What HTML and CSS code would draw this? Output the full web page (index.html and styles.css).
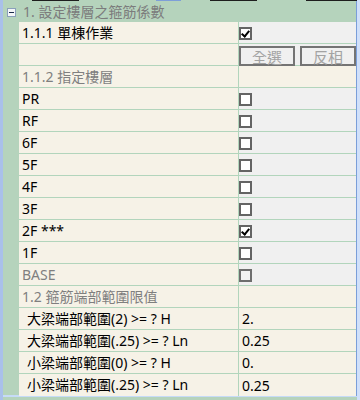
FILE: index.html
```html
<!DOCTYPE html>
<html lang="zh-Hant">
<head>
    <meta charset="UTF-8">
    <title>設定樓層之箍筋係數</title>
    <link rel="stylesheet" href="styles.css">
</head>
<body>
    <div class="frame">
        <div class="edge">
            <span class="seg" style="width:29px"></span>
            <span class="seg dark" style="width:48px"></span>
            <span class="seg" style="width:78px"></span>
            <span class="seg blue" style="width:25px"></span>
            <span class="seg" style="width:29px"></span>
            <span class="seg dark" style="width:48px"></span>
            <span class="seg" style="width:49px"></span>
            <span class="seg dark" style="width:52px"></span>
        </div>
        <div class="group-head">
            <span class="toggle"></span>
            <span class="group-title">1. 設定樓層之箍筋係數</span>
        </div>
        <div class="grid">
            <div class="gutter"></div>
            <div class="rows">
                <div class="row">
                    <div class="label">1.1.1 單棟作業</div>
                    <div class="value gray"><span class="check on"></span></div>
                </div>
                <div class="row">
                    <div class="label"></div>
                    <div class="value gray buttons">
                        <button class="btn" disabled>全選</button>
                        <button class="btn" disabled>反相</button>
                    </div>
                </div>
                <div class="row">
                    <div class="label muted">1.1.2 指定樓層</div>
                    <div class="value"></div>
                </div>
                <div class="row">
                    <div class="label">PR</div>
                    <div class="value gray"><span class="check"></span></div>
                </div>
                <div class="row">
                    <div class="label">RF</div>
                    <div class="value gray"><span class="check"></span></div>
                </div>
                <div class="row">
                    <div class="label">6F</div>
                    <div class="value gray"><span class="check"></span></div>
                </div>
                <div class="row">
                    <div class="label">5F</div>
                    <div class="value gray"><span class="check"></span></div>
                </div>
                <div class="row">
                    <div class="label">4F</div>
                    <div class="value gray"><span class="check"></span></div>
                </div>
                <div class="row">
                    <div class="label">3F</div>
                    <div class="value gray"><span class="check"></span></div>
                </div>
                <div class="row">
                    <div class="label">2F ***</div>
                    <div class="value gray"><span class="check on"></span></div>
                </div>
                <div class="row">
                    <div class="label">1F</div>
                    <div class="value gray"><span class="check"></span></div>
                </div>
                <div class="row">
                    <div class="label muted">BASE</div>
                    <div class="value gray"><span class="check off"></span></div>
                </div>
                <div class="row">
                    <div class="label muted">1.2 箍筋端部範圍限值</div>
                    <div class="value"></div>
                </div>
                <div class="row">
                    <div class="label sub">大梁端部範圍(2) &gt;= ? H</div>
                    <div class="value text">2.</div>
                </div>
                <div class="row">
                    <div class="label sub">大梁端部範圍(.25) &gt;= ? Ln</div>
                    <div class="value text">0.25</div>
                </div>
                <div class="row">
                    <div class="label sub">小梁端部範圍(0) &gt;= ? H</div>
                    <div class="value text">0.</div>
                </div>
                <div class="row last">
                    <div class="label sub">小梁端部範圍(.25) &gt;= ? Ln</div>
                    <div class="value text">0.25</div>
                </div>
            </div>
        </div>
        <div class="foot"></div>
    </div>
</body>
</html>
```

FILE: styles.css
```css
body {
    margin: 0;
    background-color: #b5d3bc;
    font-family: "Noto Sans", "Noto Sans CJK TC", sans-serif;
    font-size: 14px;
    color: #000;
}
.frame {
    width: 360px;
    height: 400px;
    box-sizing: border-box;
    border-left: 3px solid #a9c0ea;
    border-right: 3px solid #d0e0fa;
    background-color: #b5d3bc;
    overflow: hidden;
}
.edge {
    display: flex;
    height: 1px;
    background-color: #b5d3bc;
}
.seg {
    display: block;
    height: 1px;
}
.seg.dark {
    background-color: #1e1e1e;
}
.seg.blue {
    background-color: #7e9fd8;
}
.group-head {
    display: flex;
    align-items: center;
    height: 21px;
    border-right: 1px solid #7a9ed9;
}
.toggle {
    position: relative;
    width: 7px;
    height: 7px;
    margin: 1px 0 0 4px;
    border: 1px solid #8aa0bb;
    background-color: #f4f6f8;
}
.toggle::after {
    content: "";
    position: absolute;
    left: 1px;
    top: 3px;
    width: 5px;
    height: 1px;
    background-color: #1a2a4a;
}
.group-title {
    margin-left: 7px;
    color: #7c7c7c;
    line-height: 21px;
}
.grid {
    display: flex;
}
.gutter {
    width: 16px;
    flex-shrink: 0;
}
.rows {
    flex: 1;
    border-right: 1px solid #7a9ed9;
}
.row {
    display: flex;
    height: 21px;
    border-bottom: 1px solid #b2d5bc;
}
.row.last {
    border-bottom: none;
    height: 22px;
}
.label {
    width: 216px;
    padding-left: 3px;
    border-right: 1px solid #b2d5bc;
    background-color: #f6f2e7;
    line-height: 21px;
    white-space: nowrap;
    overflow: hidden;
}
.label.muted {
    color: #7f7f7f;
}
.label.sub {
    padding-left: 8px;
    width: 211px;
}
.value {
    flex: 1;
    display: flex;
    align-items: center;
    background-color: #f6f2e7;
}
.value.gray {
    background-color: #f0f0f0;
}
.value.text {
    padding-left: 3px;
    line-height: 21px;
}
.check {
    position: relative;
    width: 9px;
    height: 9px;
    margin-top: 1px;
    border: 2px solid #646464;
    background-color: #fff;
}
.check.off {
    border-color: #6e6e6e;
    background-color: #f2f2f2;
}
.check.on::after {
    content: "";
    position: absolute;
    left: 2px;
    top: 0;
    width: 3px;
    height: 6px;
    border: solid #000;
    border-width: 0 2px 2px 0;
    transform: rotate(40deg);
}
.buttons {
    gap: 5px;
    align-items: flex-start;
    padding-top: 2px;
}
.btn {
    width: 56px;
    height: 20px;
    padding: 0;
    border: 2px solid #747474;
    background-color: #f0f0f0;
    color: #a3a3a3;
    font-family: "Noto Sans CJK TC", sans-serif;
    font-size: 15px;
    line-height: 15px;
}
.foot {
    height: 2px;
    margin-top: -1px;
    background-color: #c6dbf7;
}
```
